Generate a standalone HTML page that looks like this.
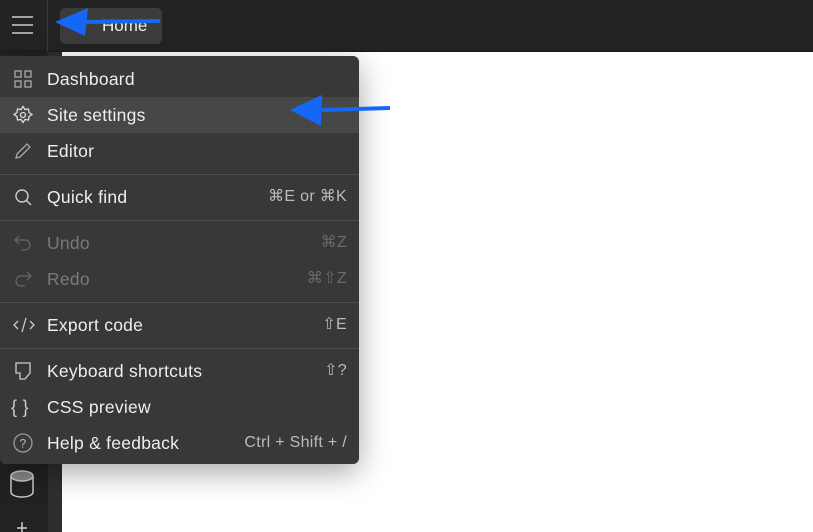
<!DOCTYPE html>
<html><head><style>
*{margin:0;padding:0;box-sizing:border-box}
body{width:813px;height:532px;overflow:hidden;background:#fff;font-family:"Liberation Sans",sans-serif;position:relative}
.top{position:absolute;left:0;top:0;width:813px;height:52px;background:#232323;border-bottom:1px solid #1a1a1a}
.hb{position:absolute;left:0;top:0;width:48px;height:52px;border-right:1px solid #3a3a3a}
.side{position:absolute;left:0;top:52px;width:48px;height:480px;background:#222}
.strip{position:absolute;left:48px;top:52px;width:14px;height:480px;background:#2e2e2e}
.home{position:absolute;left:60px;top:8px;width:102px;height:36px;background:#3c3c3c;border-radius:5px;color:#eee;font-size:17px;line-height:36px;padding-left:42px}
.menu{position:absolute;left:0;top:56px;width:359px;height:408px;background:#383838;border-radius:0 6px 6px 6px;box-shadow:0 8px 30px rgba(0,0,0,.35);padding-top:5px}
.it{position:relative;height:36px;line-height:36px;color:#eee;font-size:17.5px;letter-spacing:.25px;padding-left:47px}
.it.hl{background:#474747}
.it.dis{color:#7a7a7a}
.it .k{position:absolute;right:12px;top:0;color:#bbb;font-size:16px;letter-spacing:.3px}
.it.dis .k{color:#6a6a6a}
.it svg{position:absolute;left:13px;top:8px}
.sep{height:1px;background:#4e4e4e;margin:4.5px 0}
</style></head><body>
<div class="top"><div class="hb">
<svg width="48" height="52"><g stroke="#ccc" stroke-width="1.5"><line x1="12" y1="17" x2="33" y2="17"/><line x1="12" y1="25" x2="33" y2="25"/><line x1="12" y1="33" x2="33" y2="33"/></g></svg></div>
<div class="home">Home</div></div>
<div class="side"><svg width="48" height="480" style="position:absolute;left:0;top:0"><g fill="none" stroke="#ccc" stroke-width="1.5"><ellipse cx="22" cy="424" rx="11" ry="5" fill="#888"/><path d="M11 424v16c0 3 5 5 11 5s11-2 11-5v-16"/><path d="M22 470v10M17 476h10"/></g></svg></div>
<div class="strip"></div>
<div class="menu">
<div class="it"><svg width="20" height="20" fill="none" stroke="#aaa" stroke-width="1.3"><rect x="2" y="2" width="6" height="6"/><rect x="12" y="2" width="6" height="6"/><rect x="2" y="12" width="6" height="6"/><rect x="12" y="12" width="6" height="6"/></svg>Dashboard</div>
<div class="it hl"><svg width="20" height="20" fill="none" stroke="#ddd" stroke-width="1.3"><path d="M10 1.5l2 3 3.5-.5.5 3.5 3 2-3 2-.5 3.5-3.5-.5-2 3-2-3-3.5.5-.5-3.5-3-2 3-2 .5-3.5 3.5.5z"/><circle cx="10" cy="10" r="2.5"/></svg>Site settings</div>
<div class="it"><svg width="20" height="20" fill="none" stroke="#aaa" stroke-width="1.3"><path d="M3 17l1-4L14 3l3 3L7 16z"/></svg>Editor</div>
<div class="sep"></div>
<div class="it"><svg width="20" height="20" fill="none" stroke="#ccc" stroke-width="1.4"><circle cx="9" cy="9" r="6"/><path d="M13.5 13.5L18 18"/></svg>Quick find<span class="k">⌘E or ⌘K</span></div>
<div class="sep"></div>
<div class="it dis"><svg width="20" height="20" fill="none" stroke="#666" stroke-width="1.3"><path d="M6 3L2 7l4 4M2 7h10a5 5 0 010 10H8"/></svg>Undo<span class="k">⌘Z</span></div>
<div class="it dis"><svg width="20" height="20" fill="none" stroke="#666" stroke-width="1.3"><path d="M14 3l4 4-4 4M18 7H8a5 5 0 000 10h4"/></svg>Redo<span class="k">⌘⇧Z</span></div>
<div class="sep"></div>
<div class="it"><svg width="22" height="20" fill="none" stroke="#ccc" stroke-width="1.3"><path d="M5 6L1 10l4 4M17 6l4 4-4 4M13 3l-4 14"/></svg>Export code<span class="k">⇧E</span></div>
<div class="sep"></div>
<div class="it"><svg width="20" height="20" fill="none" stroke="#ccc" stroke-width="1.3"><path d="M3 2h14v10l-5 6H7v-6H3z"/></svg>Keyboard shortcuts<span class="k">⇧?</span></div>
<div class="it"><span style="position:absolute;left:11px;color:#ccc;font-size:18px">{ }</span>CSS preview</div>
<div class="it"><svg width="22" height="22" fill="none" stroke="#999" stroke-width="1.3" style="top:7px;left:12px"><circle cx="11" cy="11" r="9"/><text x="11" y="15.5" font-size="12" fill="#bbb" stroke="none" text-anchor="middle" font-family="Liberation Sans">?</text></svg>Help &amp; feedback<span class="k">Ctrl + Shift + /</span></div>
</div>
<svg width="813" height="532" style="position:absolute;left:0;top:0;pointer-events:none"><g fill="#1468f5" stroke="#1468f5"><line x1="85" y1="22" x2="160" y2="21" stroke-width="4"/><path d="M55 22L88 8L85 36z" stroke="none"/><line x1="320" y1="110" x2="390" y2="108" stroke-width="4"/><path d="M290 110L322 95L321 126z" stroke="none"/></g></svg>
</body></html>
